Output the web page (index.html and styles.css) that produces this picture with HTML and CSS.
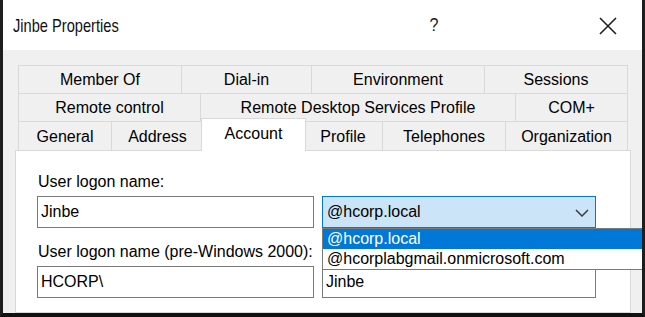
FILE: index.html
```html
<!DOCTYPE html>
<html>
<head>
<meta charset="utf-8">
<link rel="stylesheet" href="styles.css">
</head>
<body>
<div class="window">
  <div class="titlebar">
    <span class="title">Jinbe Properties</span>
    <div class="controls">
      <span class="help">?</span>
      <span class="close">
        <svg width="18" height="18" viewBox="0 0 18 18"><path d="M1 1 L17 17 M17 1 L1 17" stroke="#1e1e1e" stroke-width="1.6" fill="none"/></svg>
      </span>
    </div>
  </div>
  <div class="body">
    <div class="tabs">
      <div class="tabrow r1">
        <div class="tab">Member Of</div>
        <div class="tab">Dial-in</div>
        <div class="tab">Environment</div>
        <div class="tab">Sessions</div>
      </div>
      <div class="tabrow r2">
        <div class="tab">Remote control</div>
        <div class="tab">Remote Desktop Services Profile</div>
        <div class="tab">COM+</div>
      </div>
      <div class="tabrow r3">
        <div class="tab">General</div>
        <div class="tab">Address</div>
        <div class="tab active">Account</div>
        <div class="tab">Profile</div>
        <div class="tab">Telephones</div>
        <div class="tab">Organization</div>
      </div>
    </div>
    <div class="panel">
      <div class="lbl">User logon name:</div>
      <div class="fieldrow">
        <div class="input">Jinbe</div>
        <div class="combo">
          <span>@hcorp.local</span>
          <svg class="chev" width="14" height="8" viewBox="0 0 14 8"><path d="M1 1 L7 7 L13 1" stroke="#3c3c3c" stroke-width="1.5" fill="none"/></svg>
          <div class="dropdown">
            <div class="item sel">@hcorp.local</div>
            <div class="item">@hcorplabgmail.onmicrosoft.com</div>
          </div>
        </div>
      </div>
      <div class="lbl lbl2">User logon name (pre-Windows 2000):</div>
      <div class="fieldrow">
        <div class="input">HCORP\</div>
        <div class="input">Jinbe</div>
      </div>
    </div>
  </div>
</div>
</body>
</html>
```

FILE: styles.css
```css
* { box-sizing: border-box; }
html, body { margin: 0; padding: 0; background: #ffffff; }
.window {
  width: 645px;
  height: 317px;
  overflow: hidden;
  border-left: 3px solid #1e1e1e;
  border-right: 3px solid #1e1e1e;
  border-bottom: 4px solid #111111;
  background: #f0f0f0;
  font-family: "Liberation Sans", Arial, sans-serif;
  font-size: 16px;
  color: #000;
  display: flex;
  flex-direction: column;
}
.titlebar {
  height: 50px;
  flex: none;
  background: #ffffff;
  display: flex;
  align-items: center;
  padding-left: 10px;
}
.title {
  font-family: "Liberation Sans", Arial, sans-serif;
  font-size: 19px;
  color: #111;
  padding-top: 2px;
  display: inline-block;
  width: 130px;
  white-space: nowrap;
  transform: scaleX(0.77);
  transform-origin: left center;
}
.controls {
  margin-left: auto;
  display: flex;
  align-items: center;
  gap: 134px;
  padding-right: 14px;
}
.help {
  width: 40px;
  text-align: center;
  font-size: 19px;
  color: #1a1a1a;
  transform: scaleX(0.85);
}
.close {
  width: 40px;
  display: flex;
  justify-content: center;
  padding-top: 2px;
}
.body {
  flex: 1;
  padding: 15px 11px 0 12px;
  display: flex;
  flex-direction: column;
}
.tabs {
  margin: 0 3px;
  display: flex;
  flex-direction: column;
}
.tabrow {
  display: grid;
  height: 28px;
}
.r1 { grid-template-columns: 163px 130px 173px 144px; }
.r2 { grid-template-columns: 182px 315px 113px; }
.r3 { grid-template-columns: 93px 92px 101px 78px 123px 123px; height: 29px; }
.tab {
  border-top: 1px solid #d9d9d9;
  border-left: 1px solid #d9d9d9;
  background: #f0f0f0;
  display: flex;
  align-items: center;
  justify-content: center;
  white-space: nowrap;
  padding-top: 1px;
}
.tab:last-child { border-right: 1px solid #d9d9d9; }
.tab.active {
  position: relative;
  z-index: 2;
  background: #ffffff;
  border-right: 1px solid #d9d9d9;
  margin: -3px -2px -1px -2px;
  padding-top: 0;
  padding-bottom: 3px;
}
.tab.active + .tab { border-left: none; }
.panel {
  flex: 1;
  position: relative;
  background: #ffffff;
  border: 1px solid #d9d9d9;
  padding: 21px 0 0 21px;
}
.lbl {
  line-height: 19px;
  padding-left: 1px;
  white-space: nowrap;
}
.lbl2 { margin-top: 14px; }
.fieldrow {
  display: grid;
  grid-template-columns: 277px 274px;
  column-gap: 8px;
  margin-top: 5px;
}
.input {
  height: 32px;
  border: 1px solid #7a7a7a;
  background: #fff;
  padding-left: 3px;
  line-height: 30px;
}
.combo {
  position: relative;
  height: 32px;
  border: 1px solid #0078d7;
  background: #cce4f7;
  padding-left: 4px;
  line-height: 30px;
  display: flex;
  align-items: center;
}
.chev {
  position: absolute;
  right: 6px;
  top: 12px;
}
.dropdown {
  position: absolute;
  left: -1px;
  top: 31px;
  width: 340px;
  background: #fff;
  border: 1px solid #7a7a7a;
  z-index: 5;
}
.item {
  height: 20px;
  line-height: 20px;
  padding-left: 4px;
  white-space: nowrap;
}
.item.sel {
  background: #0078d7;
  color: #fff;
}
```
